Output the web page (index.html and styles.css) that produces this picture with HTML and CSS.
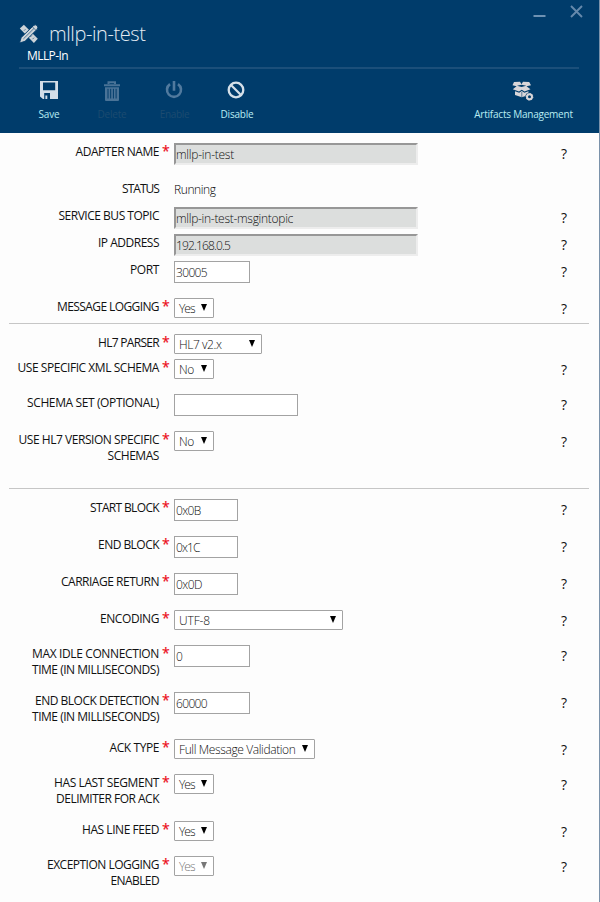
FILE: index.html
```html
<!DOCTYPE html>
<html lang="en">
<head>
<meta charset="utf-8">
<title>mllp-in-test</title>
<link rel="stylesheet" href="styles.css">
</head>
<body>
<div class="blade">
  <header class="header">
    <div class="window-controls">
      <svg width="13" height="13" viewBox="0 0 13 13"><path d="M0.5 11h12" stroke="#6e92b3" stroke-width="2"/></svg>
      <svg width="13" height="13" viewBox="0 0 13 13"><path d="M1 1L12 12M12 1L1 12" stroke="#6589ac" stroke-width="1.9"/></svg>
    </div>
    <div class="heading">
      <svg class="tools" width="20" height="20" viewBox="0 0 20 20">
        <path d="M0.8 4.6L4.9 .8 18.8 14.8 14.9 18.9Z" fill="#cdd3d8"/>
        <path d="M5 6.7l1.5-1.5M11.3 13l1.5-1.5M13.5 15.2l1.5-1.5" stroke="#003c6b" stroke-width=".6"/>
        <path d="M0.5 19L2.2 13.5 14.4 1.7Q16.3 0 18 1.5T18.2 5.2L6 17.3Z" fill="#cdd3d8" stroke="#003c6b" stroke-width=".9"/>
        <path d="M4.4 14.9L15 4.4M13.3 2.7l3.8 3.8" stroke="#003c6b" stroke-width=".6"/>
      </svg>
      <h1 class="title"><span class="fit" data-width="96.5">mllp-in-test</span></h1>
    </div>
    <div class="subtitle"><span class="fit" data-width="41">MLLP-In</span></div>
    <nav class="toolbar">
      <div class="command save">
        <svg width="18" height="18" viewBox="0 0 18 18"><path fill-rule="evenodd" d="M0 0H18V18H3L0 15.5ZM3 1.5V9.2H15.2V1.5ZM4.2 12V18H10V12ZM5.4 14.5H7.3V18H5.4Z" fill="#d3dee8"/></svg>
        <span class="fit" data-width="21">Save</span>
      </div>
      <div class="command delete off">
        <svg width="18" height="20" viewBox="0 0 18 20"><path d="M5.5 3V1.2H12V3M1 4.3H17" fill="none" stroke="#4a7397" stroke-width="2"/><path d="M2 6.2H16V19Q16 20 15 20H3Q2 20 2 19Z" fill="#4a7397"/><path d="M5 7.8V17.5M7.7 7.8V17.5M10.4 7.8V17.5M13.1 7.8V17.5" stroke="#003c6b" stroke-width="1"/></svg>
        <span class="fit" data-width="29">Delete</span>
      </div>
      <div class="command enable off">
        <svg width="18" height="18" viewBox="0 0 18 18"><path d="M5 3.1A7 7 0 1 0 13 3.1M9 0V9.8" fill="none" stroke="#517a9e" stroke-width="2.6"/></svg>
        <span class="fit" data-width="29.5">Enable</span>
      </div>
      <div class="command disable">
        <svg width="18" height="18" viewBox="0 0 18 18"><circle cx="9" cy="9" r="7.3" fill="none" stroke="#d5e0e9" stroke-width="2.3"/><path d="M4 4L14 14" stroke="#d5e0e9" stroke-width="2.2"/></svg>
        <span class="fit" data-width="33">Disable</span>
      </div>
      <div class="command artifacts">
        <svg width="22" height="20" viewBox="0 0 22 20">
          <path d="M2 1L8 .8 9.5 3.2 11 .8 17.2 1 19 4.2 14.5 5.2 18.5 8.2 12.5 10.6 9.8 8.8 7 10.6 .8 8.2 4.6 5.2 .5 4.2Z" fill="#d9d6d9"/>
          <path d="M5 4.8L9.6 3.8 14.2 4.8 9.6 6Z" fill="#003c6b"/>
          <path d="M3 10.2L7.2 11.8 9.8 10 12.4 11.8 16.5 10.2V14L9.8 16.2 3 14Z" fill="#d9d6d9"/>
          <path d="M9.8 11V16" stroke="#003c6b" stroke-width=".6"/>
          <circle cx="17.5" cy="15.8" r="4.3" fill="#003c6b"/>
          <circle cx="17.5" cy="15.8" r="2.5" fill="none" stroke="#d9d6d9" stroke-width="2"/>
          <circle cx="17.5" cy="15.8" r="3.4" fill="none" stroke="#d9d6d9" stroke-width="1" stroke-dasharray="1.3 1.3"/>
        </svg>
        <span class="fit" data-width="98.5">Artifacts Management</span>
      </div>
    </nav>
  </header>
  <main class="form" id="form"></main>
</div>
<script src="form.js"></script>
</body>
</html>
```
FILE: form.js
```js
// label: lines of [text, width]; height is the distance to the next row
const yes = ["Yes", 15.5], no = ["No", 15];
const millis = ["TIME (IN MILLISECONDS)", 127];
const sections = [
  [
    { label: [["ADAPTER NAME", 83.5]], req: 1, kind: "readonly", size: 244, value: ["mllp-in-test", 58], height: 37 },
    { label: [["STATUS", 37]], kind: "plain", value: ["Running", 41.5], height: 27, nohelp: 1 },
    { label: [["SERVICE BUS TOPIC", 100.5]], kind: "readonly", size: 244, value: ["mllp-in-test-msgintopic", 117], height: 27 },
    { label: [["IP ADDRESS", 61]], kind: "readonly", size: 244, value: ["192.168.0.5", 54], height: 27 },
    { label: [["PORT", 29]], kind: "input", size: 76, value: ["30005", 31], height: 37 },
    { label: [["MESSAGE LOGGING", 102]], req: 1, kind: "select", size: 40, value: yes, height: 25 }
  ],
  [
    { label: [["HL7 PARSER", 61]], req: 1, kind: "select", size: 88, value: ["HL7 v2.x", 42.5], height: 25, nohelp: 1 },
    { label: [["USE SPECIFIC XML SCHEMA", 141.5]], req: 1, kind: "select", size: 40, value: no, height: 35 },
    { label: [["SCHEMA SET (OPTIONAL)", 132]], kind: "input", size: 124, value: ["", 0], height: 37 },
    { label: [["USE HL7 VERSION SPECIFIC", 140.5], ["SCHEMAS", 51.5]], req: 1, kind: "select", size: 40, value: no, height: 57 }
  ],
  [
    { label: [["START BLOCK", 69]], req: 1, kind: "input", size: 64, value: ["0x0B", 24.5], height: 37 },
    { label: [["END BLOCK", 61]], req: 1, kind: "input", size: 64, value: ["0x1C", 23.5], height: 37 },
    { label: [["CARRIAGE RETURN", 98]], req: 1, kind: "input", size: 64, value: ["0x0D", 26], height: 37 },
    { label: [["ENCODING", 59]], req: 1, kind: "select", size: 169, value: ["UTF-8", 31], height: 35 },
    { label: [["MAX IDLE CONNECTION", 127], millis], req: 1, kind: "input", size: 76, value: ["0", 6.5], height: 47 },
    { label: [["END BLOCK DETECTION", 124], millis], req: 1, kind: "input", size: 76, value: ["60000", 31], height: 47 },
    { label: [["ACK TYPE", 49.5]], req: 1, kind: "select", size: 141, value: ["Full Message Validation", 116.5], height: 35 },
    { label: [["HAS LAST SEGMENT", 105], ["DELIMITER FOR ACK", 103]], req: 1, kind: "select", size: 40, value: yes, height: 47 },
    { label: [["HAS LINE FEED", 77]], req: 1, kind: "select", size: 40, value: yes, height: 35 },
    { label: [["EXCEPTION LOGGING", 112], ["ENABLED", 48.5]], req: 1, kind: "select", size: 40, value: yes, height: 46, disabled: 1 }
  ]
];

const span = ([text, width]) => `<span class="fit" data-width="${width}">${text}</span>`;
const arrow = '<svg class="arrow" width="6" height="7" viewBox="0 0 6 7"><path d="M0 0H6L3 7Z"/></svg>';

function row(r) {
  const label = r.label.map(l => `<div>${span(l)}</div>`).join("");
  const size = r.size ? ` style="width:${r.size}px"` : "";
  return `<div class="row" style="height:${r.height}px">
    <div class="label">${label}</div>
    <div class="required">${r.req ? "*" : ""}</div>
    <div class="control ${r.kind}${r.disabled ? " disabled" : ""}"${size}>${r.value[0] ? span(r.value) : ""}${r.kind === "select" ? arrow : ""}</div>
    <div class="help">${r.nohelp ? "" : "?"}</div>
  </div>`;
}

document.getElementById("form").innerHTML =
  sections.map(s => `<section class="section">${s.map(row).join("")}</section>`).join("");

// Track each text to its intended width
document.querySelectorAll(".fit").forEach(el => {
  const gap = Number(el.dataset.width) - el.getBoundingClientRect().width;
  el.style.letterSpacing = gap / el.textContent.length + "px";
});
```
FILE: styles.css
```css
* { box-sizing: border-box; }
body {
  margin: 0;
  background: #fdfdfd;
  color: #111;
  font-family: "Open Sans", "Noto Sans", sans-serif;
  font-size: 12px;
}
.blade {
  width: 600px;
  height: 902px;
  overflow: hidden;
  border-right: 1px solid #7b92aa;
}
.fit { white-space: nowrap; display: inline-block; }
.header {
  height: 133px;
  background: #003c6b;
  padding: 5px 20px 0 19px;
}
.window-controls {
  display: flex;
  justify-content: flex-end;
  gap: 24px;
  height: 18px;
  margin-right: -3.5px;
}
.heading {
  display: flex;
  height: 22px;
  gap: 10px;
  align-items: center;
}
.tools { flex: none; }
.title {
  margin: 0;
  color: #e3ebf2;
  font-size: 20px;
  font-weight: 300;
  line-height: 22px;
}
.subtitle {
  height: 24px;
  padding-left: 8px;
  color: #fff;
  line-height: 21px;
  border-bottom: 2px solid #1b4f7a;
}
.toolbar {
  display: flex;
  padding-top: 12px;
}
.command {
  display: flex;
  flex-direction: column;
  align-items: center;
  justify-content: space-between;
  height: 40px;
  width: 63px;
  color: #b9edf3;
  font-size: 10px;
  line-height: 14px;
}
.command.save { width: 60px; }
.command.delete { width: 66px; }
.command.enable { width: 59px; }
.command.enable svg { margin-left: -1px; }
.command.disable svg { margin-left: -2px; }
.command.disable { width: 66px; }
.command.artifacts { width: 99px; margin-left: auto; margin-right: 6px; }
.command.artifacts svg { margin-left: -2px; }
.command.off { color: #1c4b70; }
.form { padding: 0 9px; }
.section { padding-top: 10px; border-bottom: 1px solid #c6c6c6; margin-right: 1px; }
.section:last-child { border-bottom: 0; }
.row {
  display: grid;
  grid-template-columns: 150px 15px 1fr 30px;
}
.label {
  padding-top: 1px;
  text-align: right;
  line-height: 16px;
}
.required {
  padding-left: 3px;
  color: #ec0c18;
  font-size: 14px;
  line-height: 16px;
  -webkit-text-stroke: 0.2px #ec0c18;
}
.control {
  display: flex;
  align-items: center;
  height: 22px;
  font-weight: 300;
  line-height: 18px;
  padding-top: 2px;
}
.plain { height: 20px; padding-top: 0; color: #000; }
.input { border: 1px solid #a3a3a3; padding-left: 1px; background: #fff; }
.readonly {
  padding-left: 0;
  border: 2px solid;
  border-color: #979797 #ededed #ededed #979797;
  background: #dcdedd;
}
.select {
  height: 20px;
  border: 1px solid #a3a3a3;
  border-radius: 1px;
  background: #fff;
  padding: 2px 6px 0 4px;
  justify-content: space-between;
}
.arrow { margin-top: -3px; fill: #000; }
.disabled { color: #777; }
.disabled .arrow { fill: #777; }
.help { font-size: 14px; line-height: 22px; padding-left: 2px; }
```
